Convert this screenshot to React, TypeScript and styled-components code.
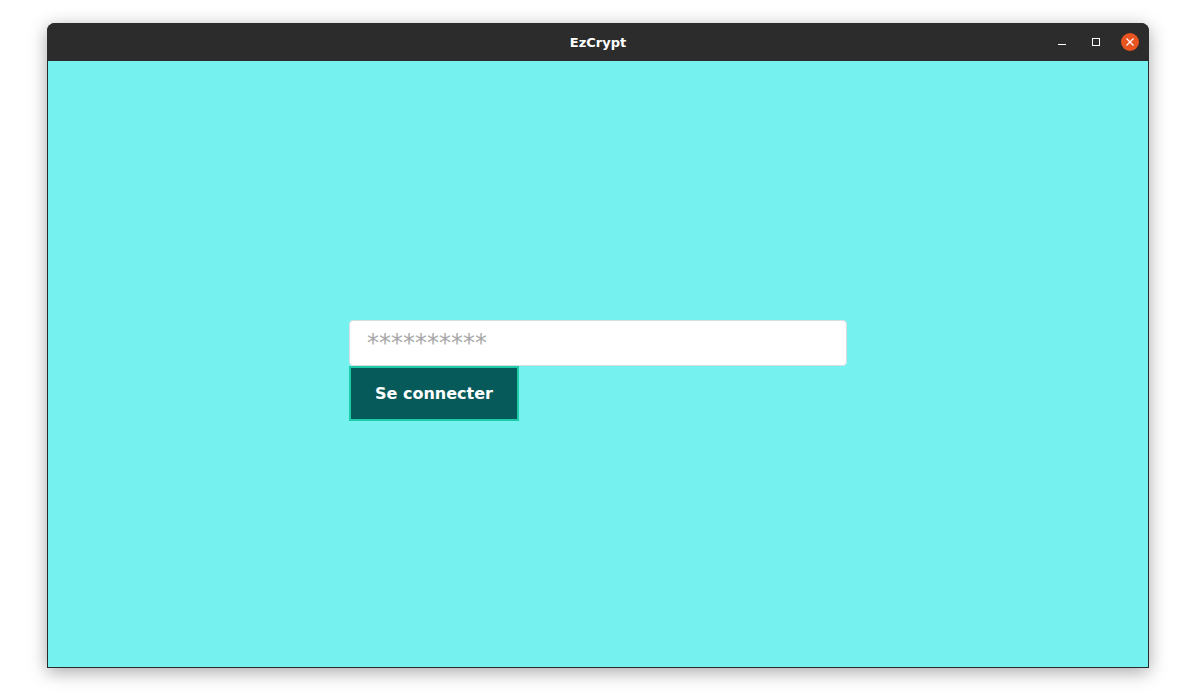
import React from "react";
import styled, { createGlobalStyle } from "styled-components";

const Global = createGlobalStyle`
  html, body { margin: 0; padding: 0; background: #ffffff; }
  body { font-family: "DejaVu Sans", "Noto Sans", sans-serif; }
`;

const Stage = styled.div`
  width: 1193px;
  height: 696px;
  padding: 23px 0 0 47px;
  box-sizing: border-box;
`;

const Window = styled.div`
  width: 1102px;
  height: 645px;
  display: flex;
  flex-direction: column;
  border-radius: 8px 8px 0 0;
  box-shadow: 0 4px 18px rgba(0, 0, 0, 0.35);
  overflow: hidden;
  background: #2c2c2c;
`;

const TitleBar = styled.div`
  height: 38px;
  flex: none;
  position: relative;
  display: flex;
  align-items: center;
  justify-content: center;
  background: #2c2c2c;
  color: #ffffff;
  font-family: "DejaVu Sans", sans-serif;
  font-weight: bold;
  font-size: 13px;
`;

const Controls = styled.div`
  position: absolute;
  right: 10px;
  top: 0;
  bottom: 0;
  display: flex;
  align-items: center;
  gap: 16px;
`;

const Ctrl = styled.div`
  width: 18px;
  height: 18px;
  display: flex;
  align-items: center;
  justify-content: center;
`;

const CloseBtn = styled(Ctrl)`
  border-radius: 50%;
  background: #e95420;
`;

const Content = styled.div`
  flex: 1;
  background: #75f2f0;
  border: 1px solid #2a2a2a;
  border-top: none;
  display: flex;
  align-items: center;
  justify-content: center;
  padding-top: 12px;
`;

const Form = styled.div`
  width: 498px;
  display: flex;
  flex-direction: column;
  align-items: flex-start;
`;

const Input = styled.input`
  width: 498px;
  height: 46px;
  box-sizing: border-box;
  border: 1px solid #d6dde0;
  border-radius: 4px;
  background: #ffffff;
  padding: 0 17px;
  font-family: "DejaVu Sans", sans-serif;
  font-size: 24px;
  outline: none;
  &::placeholder { color: #a8a8a8; }
`;

const Button = styled.button`
  width: 170px;
  height: 55px;
  box-sizing: border-box;
  background: #065a5a;
  border: 2px solid #1fcaa6;
  color: #ffffff;
  font-family: "DejaVu Sans", sans-serif;
  font-weight: bold;
  font-size: 16px;
  padding: 0;
  cursor: pointer;
`;

export default function App() {
  return (
    <>
      <Global />
      <Stage>
        <Window>
          <TitleBar>
            EzCrypt
            <Controls>
              <Ctrl>
                <svg width="10" height="10" viewBox="0 0 10 10">
                  <rect x="1" y="7" width="8" height="1" fill="#fff" />
                </svg>
              </Ctrl>
              <Ctrl>
                <svg width="10" height="10" viewBox="0 0 10 10">
                  <rect x="1.5" y="1.5" width="7" height="7" fill="none" stroke="#fff" strokeWidth="1" />
                </svg>
              </Ctrl>
              <CloseBtn>
                <svg width="10" height="10" viewBox="0 0 10 10">
                  <path d="M1.5 1.5 L8.5 8.5 M8.5 1.5 L1.5 8.5" stroke="#fff" strokeWidth="1.2" />
                </svg>
              </CloseBtn>
            </Controls>
          </TitleBar>
          <Content>
            <Form>
              <Input type="password" placeholder="**********" />
              <Button>Se connecter</Button>
            </Form>
          </Content>
        </Window>
      </Stage>
    </>
  );
}
